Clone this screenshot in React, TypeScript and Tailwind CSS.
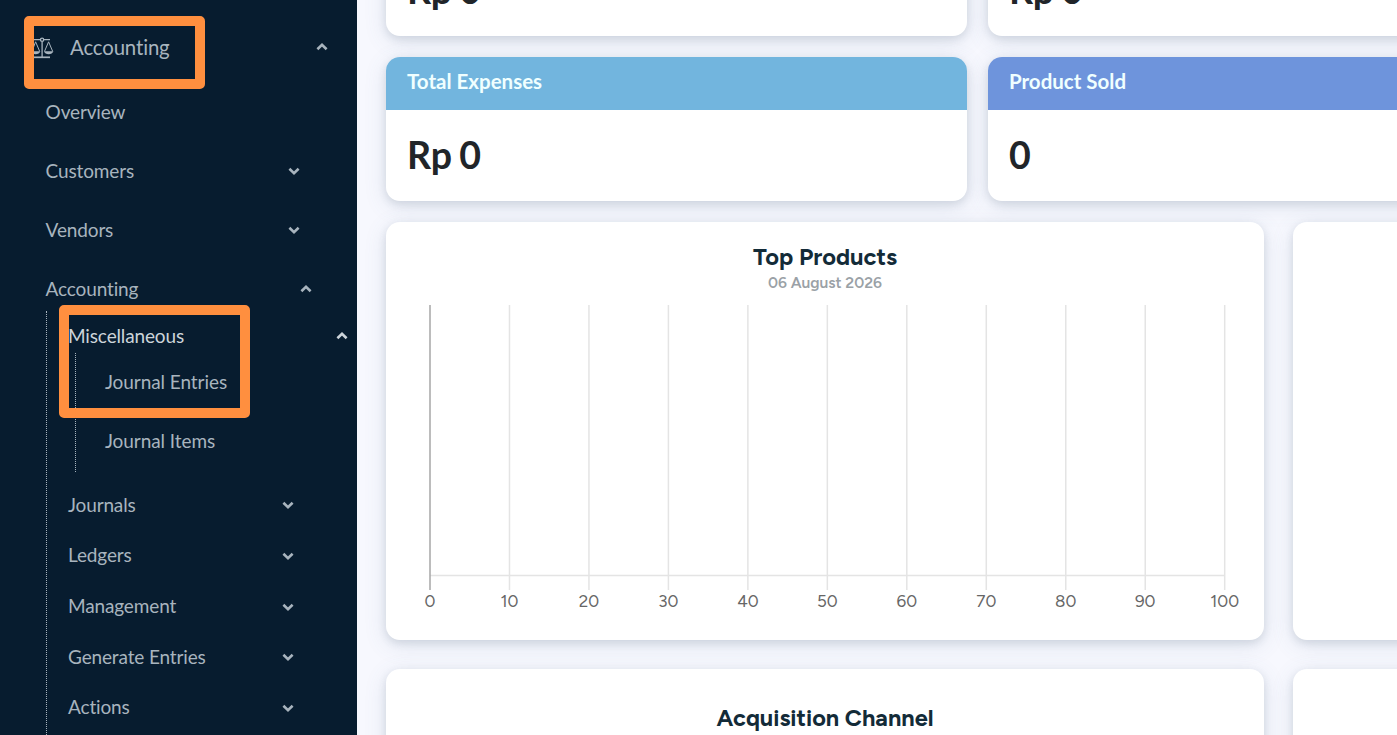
import clsx from "clsx";

type NavItem = {
  label: string;
  row: string;
  chevron?: "up" | "down";
};

const MAIN_ITEMS: NavItem[] = [
  { label: "Overview", row: "pr-[57px]" },
  { label: "Customers", row: "pr-[57px]", chevron: "down" },
  { label: "Vendors", row: "pr-[57px]", chevron: "down" },
  { label: "Accounting", row: "pr-[45px]", chevron: "up" },
];

const SUB_ITEMS = ["Journals", "Ledgers", "Management", "Generate Entries", "Actions"];

const TICKS = [0, 10, 20, 30, 40, 50, 60, 70, 80, 90, 100];

const CARD_SHADOW = "shadow-[0_3px_8px_rgba(60,80,95,0.14),0_5px_22px_rgba(80,105,150,0.15)]";

function Chevron({ dir }: { dir: "up" | "down" }) {
  return (
    <svg width="12" height="12" viewBox="0 0 12 12" className={clsx("relative shrink-0", dir === "up" ? "rotate-180" : "top-[0.5px]")}>
      <path d="M1.4 3.8 L6 8.2 L10.6 3.8" fill="none" stroke="currentColor" strokeWidth="2.6" />
    </svg>
  );
}

function ScaleIcon() {
  return (
    <svg width="24" height="22" viewBox="0 0 24 22" fill="none" stroke="currentColor" strokeWidth="1.3" className="relative top-px shrink-0">
      <path d="M4 2.7H10.4M13.8 2.7H20M12.1 4.4V20" />
      <circle cx="12.1" cy="2.7" r="1.6" />
      <path d="M4 20.3H20" strokeWidth="1.7" />
      <path d="M5.6 4.8L1.9 14.4M5.6 4.8L9.7 14.4M18.6 4.8L14.5 14.4M18.6 4.8L22.7 14.4" strokeWidth="1" />
      <path d="M1 14.2H10.3C9.5 18.2 1.8 18.2 1 14.2ZM14 14.2H23.3C22.5 18.2 14.8 18.2 14 14.2Z" fill="currentColor" stroke="none" />
    </svg>
  );
}

function Sidebar() {
  return (
    <aside className="relative h-full w-[357px] shrink-0 overflow-hidden bg-[#071c2f] text-[19px] leading-6 tracking-[-0.14px] text-[#a8b4be]">
      <div className="flex h-[82px] items-center pt-3 pr-[29px] pl-[30px]">
        <ScaleIcon />
        <span className="ml-4 flex-1 text-[20.4px]">Accounting</span>
        <Chevron dir="up" />
      </div>

      <nav>
        {MAIN_ITEMS.map((item) => (
          <div key={item.label} className={clsx("flex h-[59px] items-center justify-between pl-[45.6px]", item.row)}>
            <span>{item.label}</span>
            {item.chevron && <Chevron dir={item.chevron} />}
          </div>
        ))}

        <div className="-mt-[7px] ml-[46px] h-[460px] border-l border-dotted border-[#a8b4be] pt-[3px]">
          <div className="flex h-[44px] items-center justify-between pr-[9px] pl-[21px] text-[#ccd4da]">
            <span>Miscellaneous</span>
            <Chevron dir="up" />
          </div>
          <div className="-mt-[5px] ml-[28px] h-[119px] border-l border-dotted border-[#a8b4be] tracking-[-0.07px]">
            <div className="flex h-[58px] items-center pl-[29px]">Journal Entries</div>
            <div className="flex h-[60px] items-center pl-[29px]">Journal Items</div>
          </div>
          <div className="pt-[7.6px]">
            {SUB_ITEMS.map((label) => (
              <div key={label} className="flex h-[50.6px] items-center justify-between pr-[63px] pl-[21px]">
                <span>{label}</span>
                <Chevron dir="down" />
              </div>
            ))}
          </div>
        </div>
      </nav>

      {/* highlighted steps */}
      <div className="absolute top-4 left-6 h-[72.5px] w-[180.5px] rounded-[5px] border-[10px] border-[#ff8f3f]" />
      <div className="absolute top-[305px] left-[59px] h-[113px] w-[191px] rounded-[5px] border-[10px] border-[#ff8f3f]" />
    </aside>
  );
}

function StatCard({ title, value, color }: { title: string; value: string; color: string }) {
  return (
    <div className={clsx("h-36 w-[581px] shrink-0 overflow-hidden rounded-[14px] bg-white", CARD_SHADOW)}>
      <div className={clsx("flex h-[53px] items-center px-[21px] pb-[5px] text-[20.5px] font-bold text-[#f0ffff]", color)}>{title}</div>
      <div className="flex h-[91px] items-center px-[21px] pb-[1px] text-[37.5px] font-bold text-[#212529] [word-spacing:-2px]">{value}</div>
    </div>
  );
}

function TopProductsChart() {
  return (
    <svg width="878" height="418" viewBox="0 0 878 418" fontFamily="Figtree, Lato, sans-serif">
      <text x="439" y="43" textAnchor="middle" textLength="144" lengthAdjust="spacingAndGlyphs" fontSize="23" fontWeight="700" fill="#132b38">Top Products</text>
      <text x="439" y="66" textAnchor="middle" textLength="114" lengthAdjust="spacingAndGlyphs" fontSize="15.5" fontWeight="600" fill="#9aa1a6">06 August 2026</text>
      <path d="M44 353.5H839" stroke="#e4e4e4" strokeWidth="1.3" />
      {TICKS.map((tick) => {
        const x = 44 + tick * 7.947;
        return (
          <g key={tick}>
            <path d={`M${x} 83V368`} stroke={tick === 0 ? "#a6a6a6" : "#e4e4e4"} strokeWidth="1.5" />
            <text x={x} y="385" textAnchor="middle" fontSize="17" fill="#666">{tick}</text>
          </g>
        );
      })}
    </svg>
  );
}

export default function App() {
  return (
    <div className="flex h-[735px] w-[1397px] overflow-hidden bg-[#f7f8fe] font-[Lato,sans-serif]">
      <Sidebar />
      <main className="-mt-[108px] flex flex-1 flex-col overflow-hidden pl-[29px]">
        <div className="flex shrink-0 gap-[21px]">
          <StatCard title="Total Income" value="Rp 0" color="bg-[#72b5de]" />
          <StatCard title="Total Profit" value="Rp 0" color="bg-[#6e94dc]" />
        </div>
        <div className="mt-[21px] flex shrink-0 gap-[21px]">
          <StatCard title="Total Expenses" value="Rp 0" color="bg-[#72b5de]" />
          <StatCard title="Product Sold" value="0" color="bg-[#6e94dc]" />
        </div>
        <div className="mt-[21px] flex shrink-0 gap-[29px]">
          <section className={clsx("h-[418px] w-[878px] shrink-0 rounded-[14px] bg-white", CARD_SHADOW)}>
            <TopProductsChart />
          </section>
          <section className={clsx("h-[418px] w-[878px] shrink-0 rounded-[14px] bg-white", CARD_SHADOW)} />
        </div>
        <div className="mt-[29px] flex shrink-0 gap-[29px]">
          <section className={clsx("h-[418px] w-[878px] shrink-0 rounded-[14px] bg-white", CARD_SHADOW)}>
            <svg width="878" height="80" viewBox="0 0 878 80" fontFamily="Figtree, Lato, sans-serif">
              <text x="439" y="57" textAnchor="middle" textLength="217" lengthAdjust="spacingAndGlyphs" fontSize="23" fontWeight="700" fill="#132b38">Acquisition Channel</text>
            </svg>
          </section>
          <section className={clsx("h-[418px] w-[878px] shrink-0 rounded-[14px] bg-white", CARD_SHADOW)} />
        </div>
      </main>
    </div>
  );
}
